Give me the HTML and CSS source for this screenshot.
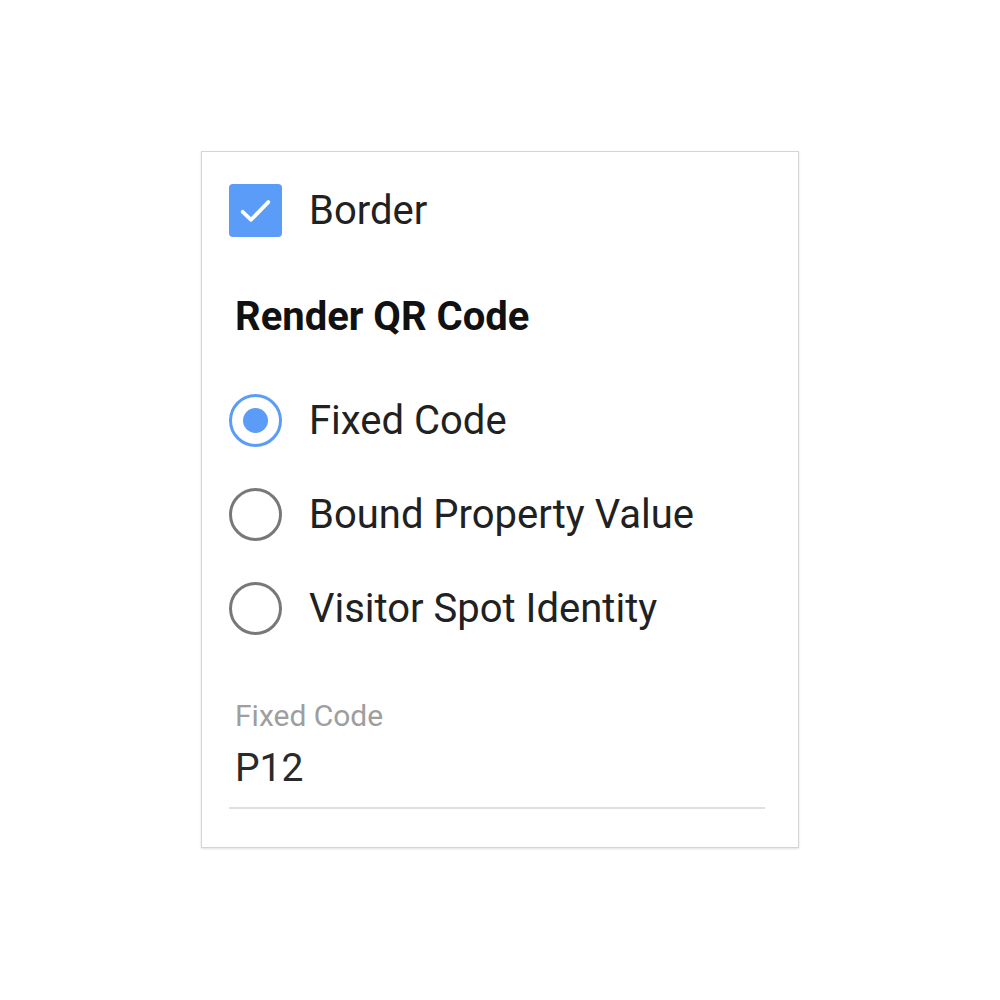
FILE: index.html
```html
<!DOCTYPE html>
<html>
<head>
<meta charset="utf-8">
<link rel="stylesheet" href="styles.css">
</head>
<body>
<div class="page">
  <div class="card">
    <label class="row check-row">
      <span class="checkbox">
        <svg viewBox="0 0 24 24" width="53" height="53"><path d="M6.2 12.6 L10 16.2 L17.8 8.2" fill="none" stroke="#fff" stroke-width="1.7" stroke-linecap="round" stroke-linejoin="round"/></svg>
      </span>
      <span class="label">Border</span>
    </label>
    <div class="heading">Render QR Code</div>
    <div class="radios">
      <label class="row radio-row">
        <span class="radio checked"><span class="dot"></span></span>
        <span class="label">Fixed Code</span>
      </label>
      <label class="row radio-row">
        <span class="radio"></span>
        <span class="label">Bound Property Value</span>
      </label>
      <label class="row radio-row">
        <span class="radio"></span>
        <span class="label">Visitor Spot Identity</span>
      </label>
    </div>
    <div class="field">
      <div class="field-label">Fixed Code</div>
      <div class="field-value">P12</div>
    </div>
  </div>
</div>
</body>
</html>
```

FILE: styles.css
```css
html, body {
  margin: 0;
  padding: 0;
  background: #fff;
}
body {
  font-family: Roboto, "Noto Sans", sans-serif;
  color: #212121;
}
.page {
  width: 1000px;
  height: 1000px;
  padding-top: 151px;
  padding-left: 201px;
  box-sizing: border-box;
}
.card {
  width: 598px;
  height: 697px;
  box-sizing: border-box;
  border: 1px solid #d4d4d4;
  box-shadow: 0 1px 2px rgba(0,0,0,0.12);
  padding: 32px 33px 0 27px;
}
.row {
  display: flex;
  align-items: center;
  gap: 27px;
  height: 53px;
}
.label {
  font-size: 40px;
  line-height: 1;
}
.checkbox {
  width: 53px;
  height: 53px;
  background: #5b9cf8;
  border-radius: 4px;
  display: flex;
}
.heading {
  margin-top: 60px;
  margin-left: 6px;
  font-size: 40px;
  font-weight: 700;
  line-height: 1;
  color: #111;
}
.radios {
  margin-top: 57px;
  display: flex;
  flex-direction: column;
  gap: 41px;
}
.radio {
  width: 53px;
  height: 53px;
  box-sizing: border-box;
  border-radius: 50%;
  border: 3.5px solid #787878;
  display: flex;
  align-items: center;
  justify-content: center;
}
.radio.checked {
  border-color: #5b9cf8;
}
.dot {
  width: 25px;
  height: 25px;
  border-radius: 50%;
  background: #5b9cf8;
}
.field {
  margin-top: 66px;
  border-bottom: 2px solid #e0e0e0;
  padding-left: 6px;
  padding-bottom: 19px;
}
.field-label {
  font-size: 30px;
  color: #9e9e9e;
  line-height: 1;
}
.field-value {
  margin-top: 18px;
  font-size: 39px;
  color: #2a2a2a;
  line-height: 1;
}
```
